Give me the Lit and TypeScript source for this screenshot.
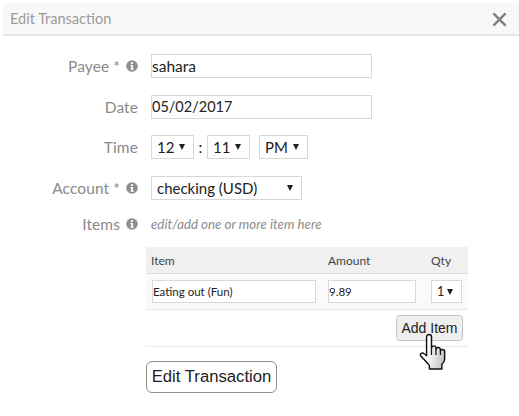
import { LitElement, html, css, svg } from "lit";
import { customElement } from "lit/decorators.js";

const infoIcon = html`<svg class="info" viewBox="0 0 12 12" width="12" height="12">
  <circle cx="6" cy="6" r="5.8" fill="#8f8f8f"></circle>
  <rect x="5" y="2.2" width="2" height="1.8" fill="#fff"></rect>
  <path d="M4.4 5h2.6v3.800h.8v1H4.400v-1h.8V6h-.8z" fill="#fff"></path>
</svg>`;

const arrow = svg`<svg class="arrow" viewBox="0 0 6 6" width="6" height="6"><path d="M0 0h6L3 6z" fill="#222"></path></svg>`;

@customElement("app-root")
export class AppRoot extends LitElement {
  static styles = css`
    :host {
      display: block;
      width: 519px;
      height: 416px;
      box-sizing: border-box;
      padding: 3px 0 0 3px;
      background: #fff;
      font-family: Lato, "Open Sans", sans-serif;
      color: #222;
      overflow: hidden;
    }
    .header {
      display: flex;
      justify-content: space-between;
      align-items: center;
      height: 31px;
      padding: 0 12px 0 7px;
      background: #f8f8f8;
      border-bottom: 2px solid #e6e6e6;
      font-size: 14.5px;
      color: #9a9a9a;
    }
    .close {
      display: block;
      margin-top: 1px;
    }
    .form {
      display: flex;
      flex-direction: column;
      padding-top: 18px;
    }
    .row {
      display: grid;
      grid-template-columns: 135px 1fr;
      column-gap: 13px;
      align-items: center;
      margin-bottom: 16.7px;
    }
    .label {
      display: flex;
      justify-content: flex-end;
      align-items: center;
      gap: 6px;
      font-size: 15.5px;
      color: #8a8a8a;
      letter-spacing: 0.1px;
    }
    .info {
      display: block;
      flex: none;
    }
    .field {
      box-sizing: border-box;
      height: 24px;
      border: 1px solid #d8d8d8;
      background: #fff;
      font-family: inherit;
      font-size: 15.5px;
      color: #222;
      padding: 0;
      display: flex;
      align-items: center;
      outline: none;
    }
    .wide {
      width: 221px;
    }
    .date {
      font-size: 14.5px;
    }
    .select {
      justify-content: space-between;
      padding: 0 8px 0 5px;
      color: #222;
      font-size: 15px;
    }
    .arrow {
      display: block;
      flex: none;
    }
    .time {
      display: flex;
      align-items: center;
    }
    .time .colon {
      width: 13px;
      text-align: center;
      font-size: 15.5px;
    }
    .hour {
      width: 43px;
    }
    .ampm {
      width: 49px;
      margin-left: 9px;
    }
    .account {
      width: 151px;
    }
    .account-row {
      margin-bottom: 14.5px;
    }
    .hint {
      font-size: 13.3px;
      font-style: italic;
      color: #8c8c8c;
    }
    .items-row {
      margin-bottom: 14.8px;
    }
    .section {
      margin-left: 143px;
      width: 322px;
      position: relative;
    }
    .table {
      background: #fafafa;
      border-bottom: 1px solid #e8e8e8;
    }
    .thead,
    .tbody {
      display: grid;
      grid-template-columns: 182px 103px 37px;
    }
    .thead {
      height: 27px;
      box-sizing: border-box;
      align-items: center;
      background: #f0f0f0;
      border-bottom: 1px solid #dcdcdc;
      font-size: 12px;
      color: #444;
    }
    .thead span:first-child {
      padding-left: 5px;
    }
    .tbody {
      height: 35px;
      align-items: center;
    }
    .cell {
      box-sizing: border-box;
      height: 23px;
      font-size: 11.5px;
    }
    .c-item {
      width: 164px;
      margin-left: 6px;
    }
    .c-amount {
      width: 88px;
    }
    .c-qty {
      width: 31px;
      padding: 0 8px 0 5px;
      justify-content: space-between;
      font-size: 12.5px;
    }
    .actions {
      display: flex;
      justify-content: flex-end;
      padding: 5px 5px 5px 0;
      border-bottom: 1px solid #eaeaea;
    }
    button {
      box-sizing: border-box;
      font-family: "Liberation Sans", Arial, sans-serif;
      color: #222;
      padding: 0;
    }
    .add {
      width: 67px;
      height: 26px;
      font-size: 14px;
      background: #efefef;
      border: 1px solid #c4c4c4;
      border-radius: 4px;
    }
    .save {
      display: block;
      margin-top: 13.3px;
      width: 131px;
      height: 32px;
      font-size: 16.7px;
      background: #fff;
      border: 1px solid #8f8f8f;
      border-radius: 6px;
    }
    .hand {
      position: absolute;
      left: 273px;
      top: 86px;
    }
  `;

  render() {
    return html`
      <div class="header">
        <span>Edit Transaction</span>
        <svg class="close" viewBox="0 0 16 16" width="15" height="15">
          <path d="M1.500 1.500l13 13M14.500 1.500l-13 13" stroke="#808080" stroke-width="2.600" fill="none"></path>
        </svg>
      </div>
      <div class="form">
        <div class="row">
          <div class="label">Payee * ${infoIcon}</div>
          <input class="field wide" value="sahara" />
        </div>
        <div class="row">
          <div class="label">Date</div>
          <input class="field wide date" value="05/02/2017" />
        </div>
        <div class="row">
          <div class="label">Time</div>
          <div class="time">
            <div class="field select hour">12 ${arrow}</div>
            <span class="colon">:</span>
            <div class="field select hour">11 ${arrow}</div>
            <div class="field select ampm">PM ${arrow}</div>
          </div>
        </div>
        <div class="row account-row">
          <div class="label">Account * ${infoIcon}</div>
          <div class="field select account">checking (USD) ${arrow}</div>
        </div>
        <div class="row items-row">
          <div class="label">Items ${infoIcon}</div>
          <div class="hint">edit/add one or more item here</div>
        </div>
        <div class="section">
          <div class="table">
            <div class="thead">
              <span>Item</span>
              <span>Amount</span>
              <span>Qty</span>
            </div>
            <div class="tbody">
              <input class="field cell c-item" value="Eating out (Fun)" />
              <input class="field cell c-amount" value="9.89" />
              <div class="field cell c-qty">1 ${arrow}</div>
            </div>
          </div>
          <div class="actions">
            <button class="add">Add Item</button>
          </div>
          <button class="save">Edit Transaction</button>
          <svg class="hand" viewBox="0 0 26 38" width="29" height="38" preserveAspectRatio="none">
            <defs>
              <linearGradient id="palm" x1="0" y1="0" x2="1" y2="0.2">
                <stop offset="0.35" stop-color="#fff"></stop>
                <stop offset="1" stop-color="#c9c9c9"></stop>
              </linearGradient>
            </defs>
            <path
              d="M9 1.500c1.300 0 2.200 1 2.200 2.300V15c.3-1.400 1-2.200 2-2.200 1.100 0 1.900.8 2 2v1.400c.3-1.100 1-1.700 2-1.700 1.100 0 1.900.8 2 2v1.400c.3-.9 1-1.400 1.800-1.400 1.200 0 2 .9 2 2.100v7.600c0 2-.8 3.400-2.500 5V36H9.300v-3.500C7 29 4.500 26.500 2 23.500c-.9-1.100-1-2.300-.2-3 .9-.8 2.100-.5 3 .4l2 2V3.800C6.800 2.500 7.700 1.500 9 1.500z"
              fill="url(#palm)"
              stroke="#111"
              stroke-width="1.300"
              stroke-linejoin="round"
            ></path>
            <path d="M11.200 15v7M15.200 16v6M19.200 17.500V22" stroke="#111" stroke-width="1.100" fill="none"></path>
          </svg>
        </div>
      </div>
    `;
  }
}
